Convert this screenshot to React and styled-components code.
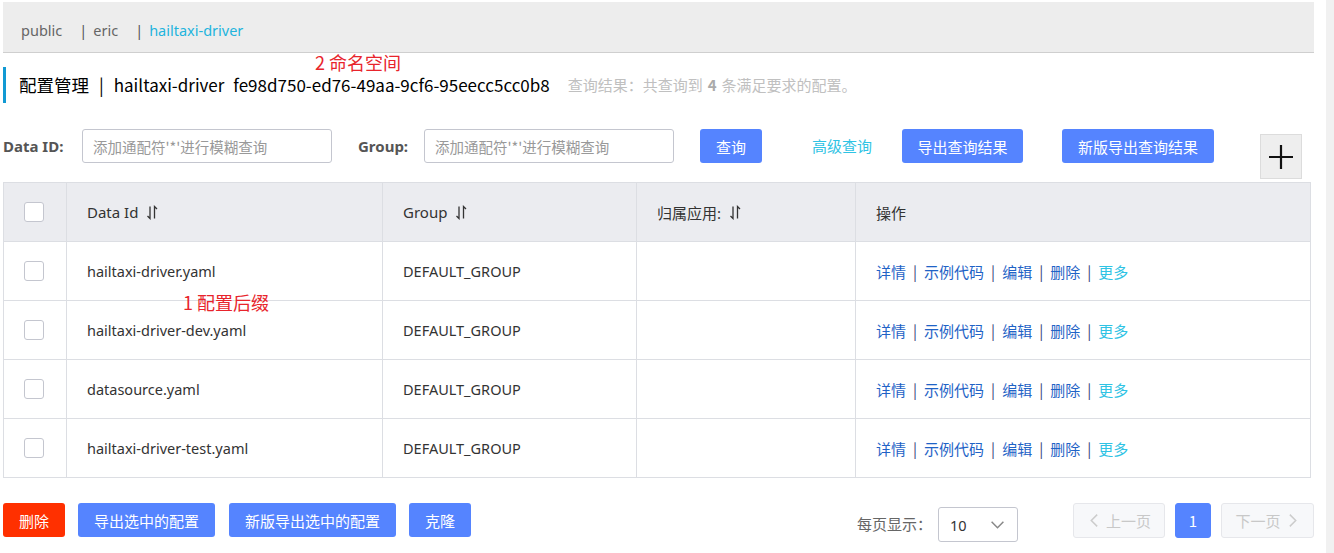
import styled, { createGlobalStyle } from "styled-components";

const GlobalStyle = createGlobalStyle`
  html, body {
    margin: 0;
    padding: 0;
    background: #fff;
    font-family: "Noto Sans", "Noto Sans CJK SC", sans-serif;
    font-size: 14.5px;
    color: #333;
  }
  * { box-sizing: border-box; }
`;

const Page = styled.div`
  display: flex;
  justify-content: space-between;
  height: 553px;
  overflow: hidden;
`;

const Main = styled.div`
  position: relative;
  flex: 0 0 1311px;
  margin: 2px 0 0 3px;
`;

const ScrollTrack = styled.div`
  flex: 0 0 8px;
  background: #f1f1f1;
`;

const NsBar = styled.div`
  display: flex;
  align-items: center;
  height: 51px;
  padding: 6px 0 0 18px;
  background: #ededed;
  border-bottom: 1px solid #cfcfcf;
`;

const NsItem = styled.span`
  display: flex;
  align-items: center;
  margin-right: 17px;
  color: ${(p) => (p.active ? "#22b4dd" : "#666")};
  &::before {
    content: ${(p) => (p.first ? "none" : '"|"')};
    color: #555;
    margin-right: 6px;
  }
`;

const TitleBar = styled.div`
  display: flex;
  align-items: center;
  height: 36px;
  margin-top: 14px;
  padding-left: 13px;
  border-left: 3px solid #1199d3;
  font-family: "Noto Sans CJK SC", sans-serif;
  font-size: 17.5px;
  line-height: 1.1;
  color: #000;
  white-space: nowrap;
`;

const TitleSep = styled.span`
  margin: 0 10px;
`;

const TitleLatin = styled.span`
  font-size: 17px;
  margin-left: ${(p) => p.gap || 0}px;
`;

const ResultHint = styled.span`
  margin-left: 18px;
  font-size: 15px;
  color: #c0c0c0;
  b {
    color: #aaa;
    margin: 0 5px;
  }
`;

const Note = styled.span`
  position: absolute;
  left: ${(p) => p.x}px;
  top: ${(p) => p.y}px;
  color: #e8242c;
  font-family: "Noto Sans CJK SC", sans-serif;
  font-size: 18px;
  line-height: 16px;
  white-space: nowrap;
`;

const SearchRow = styled.div`
  display: flex;
  align-items: flex-start;
  margin-top: 26px;
  height: 53px;
`;

const FieldLabel = styled.label`
  height: 34px;
  line-height: 34px;
  font-size: 15px;
  font-weight: bold;
  color: #555;
  margin-left: ${(p) => p.gap || 0}px;
  width: ${(p) => p.w}px;
`;

const Input = styled.input`
  width: 250px;
  height: 34px;
  padding: 0 10px;
  border: 1px solid #c4c6cf;
  border-radius: 3px;
  font-family: "Noto Sans CJK SC", sans-serif;
  font-size: 14.5px;
  outline: none;
  &::placeholder {
    color: #999;
  }
`;

const Button = styled.button`
  height: 34px;
  width: ${(p) => p.w}px;
  margin-left: ${(p) => p.gap || 0}px;
  padding: 0;
  border: none;
  border-radius: 3px;
  background: ${(p) => (p.danger ? "#ff3000" : "#5584ff")};
  color: #fff;
  font-family: "Noto Sans CJK SC", sans-serif;
  font-size: 15px;
  cursor: pointer;
`;

const LinkButton = styled.span`
  height: 34px;
  line-height: 34px;
  margin-left: 50px;
  color: #2fc3e4;
  font-family: "Noto Sans CJK SC", sans-serif;
  font-size: 15px;
`;

const PlusButton = styled.button`
  width: 42px;
  height: 45px;
  margin: 5px 0 0 46px;
  padding: 0;
  display: flex;
  align-items: center;
  justify-content: center;
  background: #eeeeee;
  border: 1px solid #dcdcdc;
`;

const Table = styled.div`
  margin-right: 3px;
  border: 1px solid #dcdee3;
  border-bottom: none;
`;

const Row = styled.div`
  display: grid;
  grid-template-columns: 62px 316px 254px 219px 1fr;
  height: 59px;
  background: ${(p) => (p.head ? "#ebecf0" : "#fff")};
  border-bottom: 1px solid #dcdee3;
`;

const Cell = styled.div`
  display: flex;
  align-items: center;
  gap: 8px;
  padding-left: 20px;
  border-left: ${(p) => (p.first ? "none" : "1px solid #dcdee3")};
  color: #333;
`;

const HeadText = styled.span`
  font-size: 15px;
`;

const Check = styled.span`
  width: 20px;
  height: 20px;
  border: 1px solid #c4c6cf;
  border-radius: 3px;
  background: #fff;
`;

const Actions = styled.div`
  display: flex;
  align-items: center;
  font-family: "Noto Sans CJK SC", sans-serif;
  font-size: 15px;
`;

const Action = styled.span`
  color: ${(p) => (p.more ? "#2fc3e4" : "#1f63c6")};
`;

const Bar = styled.span`
  margin: 0 7px;
  color: #3b4a7a;
`;

const Footer = styled.div`
  display: flex;
  align-items: flex-start;
  justify-content: space-between;
  margin-top: 25px;
`;

const Group = styled.div`
  display: flex;
  align-items: flex-start;
`;

const PageSizeLabel = styled.span`
  height: 34px;
  line-height: 34px;
  margin-top: 4px;
  color: #666;
  font-family: "Noto Sans CJK SC", sans-serif;
  font-size: 15px;
`;

const Select = styled.div`
  display: flex;
  align-items: center;
  justify-content: space-between;
  width: 80px;
  height: 35px;
  margin: 4px 55px 0 6px;
  padding: 0 12px 0 11px;
  border: 1px solid #c4c6cf;
  border-radius: 3px;
  color: #333;
`;

const PageButton = styled.button`
  display: flex;
  align-items: center;
  justify-content: center;
  gap: 4px;
  width: ${(p) => p.w}px;
  height: 35px;
  margin-left: ${(p) => p.gap || 0}px;
  padding: 0;
  border-radius: 3px;
  border: 1px solid ${(p) => (p.current ? "#5584ff" : "#e6e7eb")};
  background: ${(p) => (p.current ? "#5584ff" : "#f7f8fa")};
  color: ${(p) => (p.current ? "#fff" : "#c8c8c8")};
  font-family: "Noto Sans CJK SC", sans-serif;
  font-size: 15px;
`;

const SortIcon = () => (
  <svg width="13" height="15" viewBox="0 0 13 15" fill="none" stroke="#333" strokeWidth="1.3">
    <path d="M4 1.5V13.5L1.5 11" />
    <path d="M8.5 13.5V1.5L11 4" />
  </svg>
);

const Chevron = ({ dir, color = "#999", size = 14 }) => (
  <svg width={size} height={size} viewBox="0 0 14 14" fill="none" stroke={color} strokeWidth="1.4">
    {dir === "down" && <path d="M1.5 4.5L7 10L12.5 4.5" />}
    {dir === "left" && <path d="M9.5 1.5L4 7L9.5 12.5" />}
    {dir === "right" && <path d="M4.5 1.5L10 7L4.5 12.5" />}
  </svg>
);

const rows = [
  "hailtaxi-driver.yaml",
  "hailtaxi-driver-dev.yaml",
  "datasource.yaml",
  "hailtaxi-driver-test.yaml",
];

export default function App() {
  return (
    <>
      <GlobalStyle />
      <Page>
        <Main>
          <NsBar>
            <NsItem first>public</NsItem>
            <NsItem>eric</NsItem>
            <NsItem active>hailtaxi-driver</NsItem>
          </NsBar>

          <TitleBar>
            <span>配置管理</span>
            <TitleSep>|</TitleSep>
            <TitleLatin>hailtaxi-driver</TitleLatin>
            <TitleLatin gap={9}>fe98d750-ed76-49aa-9cf6-95eecc5cc0b8</TitleLatin>
            <ResultHint>
              查询结果：共查询到<b>4</b>条满足要求的配置。
            </ResultHint>
          </TitleBar>

          <SearchRow>
            <FieldLabel w={79}>Data ID:</FieldLabel>
            <Input placeholder="添加通配符'*'进行模糊查询" />
            <FieldLabel gap={26} w={66}>Group:</FieldLabel>
            <Input placeholder="添加通配符'*'进行模糊查询" />
            <Button w={62} gap={26}>查询</Button>
            <LinkButton>高级查询</LinkButton>
            <Button w={121} gap={30}>导出查询结果</Button>
            <Button w={152} gap={39}>新版导出查询结果</Button>
            <PlusButton>
              <svg width="26" height="26" viewBox="0 0 26 26" stroke="#111" strokeWidth="2.2">
                <path d="M13 1V25M1 13H25" />
              </svg>
            </PlusButton>
          </SearchRow>

          <Table>
            <Row head>
              <Cell first><Check /></Cell>
              <Cell><HeadText>Data Id</HeadText> <SortIcon /></Cell>
              <Cell><HeadText>Group</HeadText> <SortIcon /></Cell>
              <Cell><HeadText>归属应用:</HeadText> <SortIcon /></Cell>
              <Cell><HeadText>操作</HeadText></Cell>
            </Row>
            {rows.map((id) => (
              <Row key={id}>
                <Cell first><Check /></Cell>
                <Cell>{id}</Cell>
                <Cell>DEFAULT_GROUP</Cell>
                <Cell />
                <Cell>
                  <Actions>
                    <Action>详情</Action>
                    <Bar>|</Bar>
                    <Action>示例代码</Action>
                    <Bar>|</Bar>
                    <Action>编辑</Action>
                    <Bar>|</Bar>
                    <Action>删除</Action>
                    <Bar>|</Bar>
                    <Action more>更多</Action>
                  </Actions>
                </Cell>
              </Row>
            ))}
          </Table>

          <Footer>
            <Group>
              <Button danger w={62}>删除</Button>
              <Button w={137} gap={13}>导出选中的配置</Button>
              <Button w={167} gap={14}>新版导出选中的配置</Button>
              <Button w={62} gap={13}>克隆</Button>
            </Group>
            <Group>
              <PageSizeLabel>每页显示：</PageSizeLabel>
              <Select>
                <span>10</span>
                <Chevron dir="down" color="#888" size={15} />
              </Select>
              <PageButton w={92}>
                <Chevron dir="left" color="#ccc" size={15} />
                上一页
              </PageButton>
              <PageButton current w={36} gap={10}>1</PageButton>
              <PageButton w={93} gap={10}>
                下一页
                <Chevron dir="right" color="#ccc" size={15} />
              </PageButton>
            </Group>
          </Footer>

          <Note x={312} y={52}>2 命名空间</Note>
          <Note x={180} y={292}>1 配置后缀</Note>
        </Main>
        <ScrollTrack />
      </Page>
    </>
  );
}
